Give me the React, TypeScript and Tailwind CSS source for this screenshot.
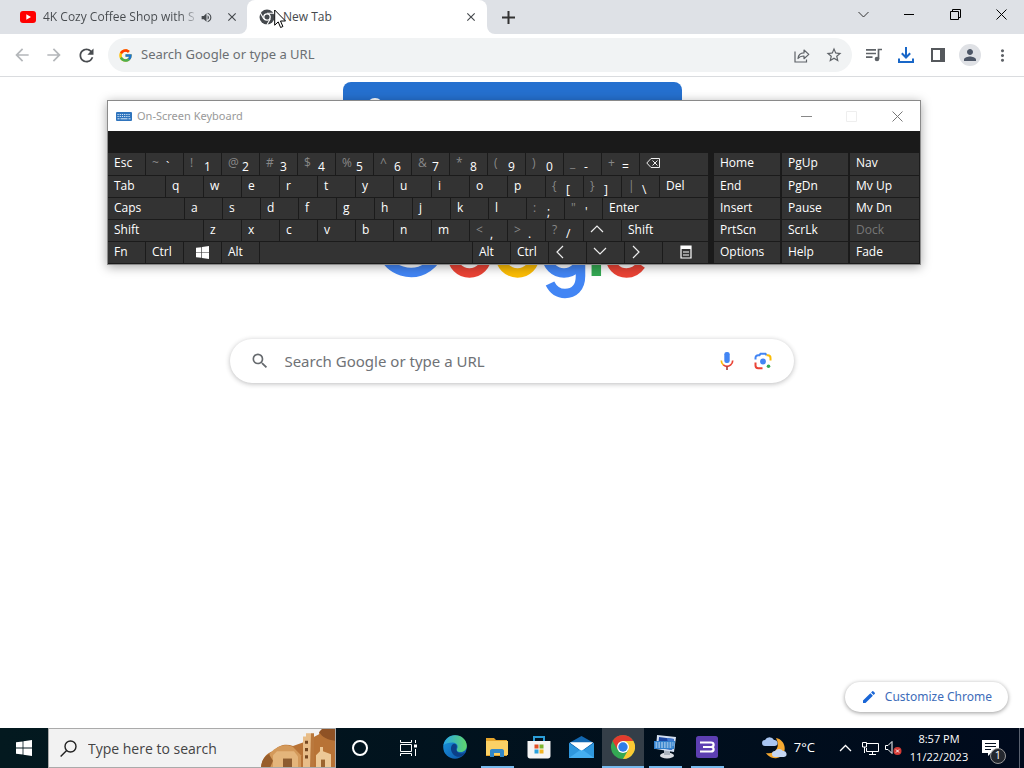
import { ReactNode } from 'react'
import { clsx } from 'clsx'
import { FcGoogle } from 'react-icons/fc'
import {
  MdArrowBack,
  MdArrowForward,
  MdClose,
  MdEdit,
  MdMoreVert,
  MdOutlineStarBorder,
  MdPerson,
  MdRefresh,
  MdSearch,
  MdVolumeUp,
} from 'react-icons/md'

interface KeyDef {
  label?: string
  shift?: string
  icon?: ReactNode
  name?: string
  size?: number
  dim?: boolean
  center?: boolean
}

const chars = (s: string): KeyDef[] => s.split('').map((c) => ({ label: c }))
const pair = (shift: string, label: string): KeyDef => ({ shift, label })

const Chevron = ({ d }: { d: string }) => (
  <svg width="14" height="14" viewBox="0 0 14 14" fill="none" stroke="#eee" strokeWidth="1.2">
    <path d={d} />
  </svg>
)

const WindowsLogo = ({ size }: { size: number }) => (
  <svg width={size} height={size} viewBox="0 0 16 16" fill="#fff">
    <path d="M0 2.3 6.6 1.4v6.2H0zM7.4 1.3 16 0v7.6H7.4zM0 8.4h6.6v6.2L0 13.7zM7.4 8.4H16V16l-8.6-1.3z" />
  </svg>
)

const backspaceIcon = (
  <svg width="14" height="12" viewBox="0 0 14 12" fill="none" stroke="#eee" strokeWidth="1">
    <path d="M5 1.5h8.5v9H5L.8 6zM6.5 3.5l5 5M11.5 3.5l-5 5" />
  </svg>
)

const menuIcon = (
  <svg width="12" height="14" viewBox="0 0 12 14" fill="none" stroke="#fff" strokeWidth="1.2">
    <path d="M1 1h10v12H1zM1 3.5h10M3 7h6M3 10h6" />
    <path d="M1 2h10" strokeWidth="2" />
  </svg>
)

const rows: KeyDef[][] = [
  [
    { label: 'Esc' },
    pair('~', '`'),
    pair('!', '1'),
    pair('@', '2'),
    pair('#', '3'),
    pair('$', '4'),
    pair('%', '5'),
    pair('^', '6'),
    pair('&', '7'),
    pair('*', '8'),
    pair('(', '9'),
    pair(')', '0'),
    pair('_', '-'),
    pair('+', '='),
    { icon: backspaceIcon, name: 'Backspace', size: 69 },
  ],
  [
    { label: 'Tab', size: 58 },
    ...chars('qwertyuiop'),
    pair('{', '['),
    pair('}', ']'),
    pair('|', '\\'),
    { label: 'Del', size: 49 },
  ],
  [
    { label: 'Caps', size: 77 },
    ...chars('asdfghjkl'),
    pair(':', ';'),
    pair('"', "'"),
    { label: 'Enter', size: 106 },
  ],
  [
    { label: 'Shift', size: 96 },
    ...chars('zxcvbnm'),
    pair('<', ','),
    pair('>', '.'),
    pair('?', '/'),
    { icon: <Chevron d="M1 9l6-6 6 6" />, name: 'Up' },
    { label: 'Shift', size: 87 },
  ],
  [
    { label: 'Fn' },
    { label: 'Ctrl' },
    { icon: <WindowsLogo size={13} />, name: 'Windows', center: true },
    { label: 'Alt' },
    { name: 'Space', size: 213 },
    { label: 'Alt' },
    { label: 'Ctrl' },
    { icon: <Chevron d="M8 1L2 7l6 6" />, name: 'Left' },
    { icon: <Chevron d="M1 3l6 6 6-6" />, name: 'Down' },
    { icon: <Chevron d="M2 1l6 6-6 6" />, name: 'Right' },
    { icon: menuIcon, name: 'Menu', size: 46, center: true },
  ],
]

const navColumns = [
  ['Home', 'End', 'Insert', 'PrtScn', 'Options'],
  ['PgUp', 'PgDn', 'Pause', 'ScrLk', 'Help'],
  ['Nav', 'Mv Up', 'Mv Dn', 'Dock', 'Fade'],
]

function Key({ def }: { def: KeyDef }) {
  const { label, shift, icon, name, size = 38, dim, center } = def
  return (
    <button
      aria-label={name}
      style={{ flex: `${size} 1 ${size}px` }}
      className={clsx(
        'flex min-w-0 items-start overflow-hidden border-r border-b border-[#1b1b1b] bg-[#333] text-left leading-5',
        dim ? 'text-[#777]' : 'text-white',
        center ? 'justify-center' : 'pl-1.5'
      )}
    >
      {shift ? (
        <>
          <span className="w-3.5 shrink-0 text-[#888]">{shift}</span>
          <span className="pt-1">{label}</span>
        </>
      ) : icon ? (
        <span className="flex h-5 items-center">{icon}</span>
      ) : (
        label
      )}
    </button>
  )
}

function OnScreenKeyboard() {
  return (
    <section
      aria-label="On-Screen Keyboard"
      className="absolute top-[100px] left-[107px] flex w-[814px] flex-col border border-[#8a8a8a] bg-[#1a1a1a] text-[12px] shadow-[0_2px_10px_rgba(0,0,0,0.35)]"
    >
      <header className="flex h-[30px] items-center bg-white pl-2 text-[#999]">
        <svg width="16" height="9" viewBox="0 0 16 9">
          <rect width="16" height="9" rx="1" fill="#2f74bd" />
          <path d="M1.5 2.5h13M1.5 4.5h13" stroke="#d7e8f8" strokeDasharray="1.2 1" />
          <path d="M1.5 6.8h2M4.5 6.8h7M12.5 6.8h2" stroke="#d7e8f8" />
        </svg>
        <h2 className="ml-[5px] grow font-['Noto_Sans',sans-serif] text-[11px]">On-Screen Keyboard</h2>
        <button aria-label="Minimize keyboard" className="flex w-[45px] justify-center">
          <svg width="11" height="11" viewBox="0 0 11 11" stroke="#888">
            <path d="M0 5.5h11" />
          </svg>
        </button>
        <button aria-label="Maximize keyboard" className="flex w-[45px] justify-center" disabled>
          <svg width="11" height="11" viewBox="0 0 11 11" fill="none" stroke="#eee">
            <path d="M.5.5h10v10H.5z" />
          </svg>
        </button>
        <button aria-label="Close keyboard" className="flex w-[46px] justify-center">
          <svg width="11" height="11" viewBox="0 0 11 11" stroke="#777">
            <path d="M.5.5l10 10M10.5.5l-10 10" />
          </svg>
        </button>
      </header>
      <div className="flex pt-[22px]">
        <div className="mr-[5px] flex grow flex-col">
          {rows.map((row, i) => (
            <div key={i} className={clsx('flex', i === 0 ? 'h-[23px]' : 'h-[22px]')}>
              {row.map((def, j) => (
                <Key key={j} def={def} />
              ))}
            </div>
          ))}
        </div>
        <div className="flex w-[206px] gap-px">
          {navColumns.map((col, i) => (
            <div key={i} className={clsx('flex flex-col', i === 2 ? 'w-[70px]' : 'flex-1')}>
              {col.map((label, j) => (
                <div key={label} className={clsx('flex', j === 0 ? 'h-[23px]' : 'h-[22px]')}>
                  <Key def={{ label, dim: label === 'Dock' }} />
                </div>
              ))}
            </div>
          ))}
        </div>
      </div>
    </section>
  )
}

function TabStrip() {
  return (
    <header className="flex h-[34px] bg-white text-[12px] text-[#45494d]">
      <div className="flex w-[247px] items-center rounded-br-lg bg-[#dee1e6] pr-2 pl-5">
        <svg width="16" height="12" viewBox="0 0 16 12" className="shrink-0">
          <rect width="16" height="12" rx="3" fill="#f00" />
          <path d="M6.3 3.3v5.4L11 6z" fill="#fff" />
        </svg>
        <span className="ml-[7px] shrink-0 bg-gradient-to-r from-[#45494d] from-90% to-[#b8bbc0] bg-clip-text whitespace-nowrap text-transparent">
          4K Cozy Coffee Shop with S
        </span>
        <button aria-label="Mute tab" className="ml-auto">
          <MdVolumeUp size={13} />
        </button>
        <button aria-label="Close tab" className="ml-3">
          <MdClose size={14} />
        </button>
      </div>
      <div className="w-60 bg-[linear-gradient(#dee1e6_50%,#fff_50%)]">
        <div className="flex h-full items-center rounded-t-lg bg-white pr-[9px] pl-3">
          <svg width="16" height="16" viewBox="0 0 16 16">
            <circle cx="8" cy="8" r="7.5" fill="#45494d" />
            <circle cx="8" cy="8" r="3.2" fill="#45494d" stroke="#fff" strokeWidth="1.3" />
            <path d="M8 4.2h7M4.8 10 1.4 4M11.2 10l-3.4 6" stroke="#fff" strokeWidth="1.1" />
          </svg>
          <span className="ml-2 grow">New Tab</span>
          <button aria-label="Close tab">
            <MdClose size={14} />
          </button>
        </div>
      </div>
      <div className="flex grow items-center rounded-bl-lg bg-[#dee1e6] text-[#222]">
        <button aria-label="New tab" className="ml-[15px]">
          <svg width="13" height="13" viewBox="0 0 13 13" stroke="#333" strokeWidth="2">
            <path d="M6.5 0v13M0 6.5h13" />
          </svg>
        </button>
        <div className="mb-1.5 ml-auto flex">
          <button aria-label="Search tabs" className="flex w-[46px] justify-center">
            <svg width="11" height="11" viewBox="0 0 11 11" fill="none" stroke="#333">
              <path d="M.5 3l5 5 5-5" />
            </svg>
          </button>
          <button aria-label="Minimize" className="flex w-[46px] justify-center">
            <svg width="10" height="11" viewBox="0 0 10 11" stroke="#000">
              <path d="M0 5.5h10" />
            </svg>
          </button>
          <button aria-label="Restore" className="flex w-[46px] justify-center">
            <svg width="11" height="11" viewBox="0 0 11 11" fill="none" stroke="#000">
              <path d="M.5 2.5h8v8h-8zM2.5 2.5v-2h8v8h-2" />
            </svg>
          </button>
          <button aria-label="Close" className="flex w-[46px] justify-center">
            <svg width="11" height="11" viewBox="0 0 11 11" stroke="#000">
              <path d="M.5.5l10 10M10.5.5l-10 10" />
            </svg>
          </button>
        </div>
      </div>
    </header>
  )
}

function ToolButton({ label, children }: { label: string; children: ReactNode }) {
  return (
    <button aria-label={label} className="flex h-8 w-8 shrink-0 items-center justify-center">
      {children}
    </button>
  )
}

function Toolbar() {
  return (
    <div className="flex h-[43px] items-center border-b border-[#dadcdf] bg-white px-1.5 text-[#5f6368]">
      <div className="flex text-[#b4b7ba]">
        <ToolButton label="Back">
          <MdArrowBack size={20} />
        </ToolButton>
        <ToolButton label="Forward">
          <MdArrowForward size={20} />
        </ToolButton>
      </div>
      <ToolButton label="Reload">
        <MdRefresh size={21} color="#494c50" />
      </ToolButton>
      <div className="mx-1.5 flex h-[34px] grow items-center rounded-full bg-[#f1f3f4] pr-0.5 pl-2.5">
        <FcGoogle size={15} />
        <input
          aria-label="Address bar"
          placeholder="Search Google or type a URL"
          className="ml-2 min-w-0 grow bg-transparent font-['Noto_Sans',sans-serif] text-[13px] outline-none placeholder:text-[#6b6f73]"
        />
        <ToolButton label="Share">
          <svg width="16" height="15" viewBox="0 0 16 15" fill="none" stroke="#5f6368" strokeWidth="1.2">
            <path d="M1 3.5V14h11.5v-2.5" />
            <path d="M4 10.5c.3-3.5 2.5-5.5 6-5.6V2l4.8 4.4-4.8 4.3V8c-2.8 0-4.6.7-6 2.5z" strokeLinejoin="round" />
          </svg>
        </ToolButton>
        <ToolButton label="Bookmark this tab">
          <MdOutlineStarBorder size={18} />
        </ToolButton>
      </div>
      <ToolButton label="Media controls">
        <svg width="16" height="14" viewBox="0 0 16 14" fill="none" stroke="#5f6368" strokeWidth="1.7">
          <path d="M0 1.8h10M0 5.5h10M0 9.2h6.5M12.5 11V1.5H16" />
          <circle cx="11" cy="11" r="2.3" fill="#5f6368" stroke="none" />
        </svg>
      </ToolButton>
      <ToolButton label="Downloads">
        <svg width="16" height="17" viewBox="0 0 16 17" fill="none" stroke="#1967c8" strokeWidth="2">
          <path d="M8 0v10M3.8 6.3 8 10.5l4.2-4.2M1 11.5V15h14v-3.5" />
        </svg>
      </ToolButton>
      <ToolButton label="Side panel">
        <svg width="14" height="14" viewBox="0 0 14 14">
          <path d="M1 1h12v12H1z" fill="none" stroke="#55585c" strokeWidth="2" />
          <path d="M9 0h5v14H9z" fill="#55585c" />
        </svg>
      </ToolButton>
      <ToolButton label="Profile">
        <span className="flex h-[22px] w-[22px] items-center justify-center rounded-full bg-[#dfe1e5] text-[#4d5666]">
          <MdPerson size={18} />
        </span>
      </ToolButton>
      <ToolButton label="Menu">
        <MdMoreVert size={19} />
      </ToolButton>
    </div>
  )
}

const GoogleLogo = () => (
  <svg width="272" height="92" viewBox="0 0 272 92" fill="none" strokeWidth="9.5" className="mx-auto mt-[46px]">
    <path d="M57 15A29.7 29.7 0 1 0 64.5 36H36" stroke="#4285f4" />
    <circle cx="93.5" cy="47.5" r="17.4" stroke="#ea4335" />
    <circle cx="141.5" cy="47.5" r="17.4" stroke="#fbbc05" />
    <circle cx="188" cy="47.500" r="17.400" stroke="#4285f4" />
    <path d="M204.500 26v42c0 12-7 17.500-15.500 17.500-7 0-12-4-15-10" stroke="#4285f4" />
    <path d="M220.300 3v65" stroke="#34a853" />
    <path d="M234 52l31-13c-3-7-9-9.500-15-9-9 .7-16 8-16 17.500 0 10 7 17.500 16.500 17.500 6.500 0 11-3 14.500-8" stroke="#ea4335" />
  </svg>
)

function NewTabPage() {
  return (
    <main className="flex grow flex-col bg-white">
      <div className="mx-auto mt-[5px] h-20 w-[339px] rounded-lg bg-[#2570cf] pt-4 pl-6">
        <div className="h-4 w-4 rounded-full bg-white" />
      </div>
      <GoogleLogo />
      <form role="search" className="mx-auto mt-[39px] flex h-11 w-[55%] items-center rounded-full bg-white pr-[22px] pl-5 shadow-[0_1px_5px_rgba(32,33,36,0.3)]">
        <MdSearch size={20} color="#666a6e" className="shrink-0" />
        <input
          aria-label="Search"
          placeholder="Search Google or type a URL"
          className="ml-3.5 min-w-0 grow bg-transparent font-['Noto_Sans',sans-serif] text-[15px] outline-none placeholder:text-[#6f7276]"
        />
        <button type="button" aria-label="Search by voice">
          <svg width="14" height="20" viewBox="0 0 14 20" fill="none" strokeWidth="1.7">
            <rect x="4.3" y="1" width="5.4" height="11" rx="2.3" fill="#4285f4" />
            <path d="M1.3 9.5c0 2 .8 3.5 2.2 4.500" stroke="#fbbc05" />
            <path d="M3.3 13.900c2.200 1.600 5.300 1.600 7.400 0 1.300-1 2-2.500 2-4.400" stroke="#ea4335" />
            <path d="M7 15v4" stroke="#b2473c" />
          </svg>
        </button>
        <button type="button" aria-label="Search by image" className="ml-5">
          <svg width="18" height="18" viewBox="0 0 18 18" fill="none" strokeWidth="2">
            <path d="M1.500 7.500V6c0-1.700 1-2.700 2.700-2.700h1.300l1-1.500h5l1 1.500" stroke="#4285f4" />
            <path d="M12.500 3.300h1.300c1.700 0 2.700 1 2.700 2.700v2.500" stroke="#fbbc05" />
            <path d="M1.500 10.500v3c0 1.700 1 2.700 2.700 2.700H8.500" stroke="#ea4335" />
            <circle cx="9" cy="9.500" r="2.900" fill="#4285f4" />
            <circle cx="14.500" cy="14.300" r="1.800" fill="#34a853" />
          </svg>
        </button>
      </form>
      <button className="mt-auto mr-4 mb-4 flex h-[30px] items-center self-end rounded-full bg-white px-4 font-['Noto_Sans',sans-serif] text-[12px] text-[#3d6cb9] shadow-[0_1px_4px_rgba(0,0,0,0.4)]">
        <MdEdit size={16} color="#1a66d6" />
        <span className="ml-2">Customize Chrome</span>
      </button>
    </main>
  )
}

const Castle = () => (
  <svg width="74" height="40" viewBox="0 0 74 38" preserveAspectRatio="none" className="shrink-0">
    <path d="M0 38c1-9 5-14 12-16 7-7 14-7 20-5l12-4L58 6c0-3 3-5 5-6h11v38z" fill="#b87336" />
    <path d="M58 4c4 5 8 7 16 8V0H62z" fill="#8f5225" />
    <path d="M9 24c8-8 17-9 23-6l8 8v12H6z" fill="#d3995a" />
    <path d="M16 22h17l4 5v11H12V26z" fill="#e4b57b" />
    <path d="M22 38v-9h9v9z" fill="#8d5c30" />
    <path d="M42 8h3V5h5v3h3v30H42z" fill="#e8bd88" />
    <path d="M50 5h3v33h-4z" fill="#b9783d" />
    <path d="M44 12h3v3h-3zM44 19h3v3h-3zM44 26h3v3h-3z" fill="#754720" />
    <path d="M55 26l4-4v-4h3v4l8 3v13H55z" fill="#edc997" />
    <path d="M60 38v-8h4v8z" fill="#9c642f" />
    <path d="M0 38c0-6 3-11 8-13l4 6-3 7z" fill="#985e2b" />
  </svg>
)

const EdgeIcon = () => (
  <svg width="24" height="24" viewBox="0 0 24 24">
    <defs>
      <linearGradient id="edgeTop" x1="0" x2="1">
        <stop offset="0" stopColor="#29a7e8" />
        <stop offset="1" stopColor="#60d66b" />
      </linearGradient>
      <linearGradient id="edgeBody" x1="0" y1="0" x2="1" y2="1">
        <stop offset="0" stopColor="#1a9be0" />
        <stop offset="1" stopColor="#0c4fa6" />
      </linearGradient>
    </defs>
    <circle cx="12" cy="12" r="11.8" fill="url(#edgeBody)" />
    <path d="M.5 10C2 4 6.5.2 12 .2c7 0 11.800 5 11.800 10.500 0 4-3 6.300-6.500 6.300-3 0-4.500-1.400-3.300-3 1.600-2.400.2-6.400-4.300-6.400C5.500 7.600 2.200 8.500.5 10z" fill="url(#edgeTop)" />
    <path d="M9.500 9.500c-3 3-1.500 10 4 12 3.500.8 7-.5 9-4-4 2.300-8.500.5-9-2.500-.2-2 .5-2.500.3-4-.5-2-2.800-2.800-4.300-1.500z" fill="#0b3f88" />
  </svg>
)

const ExplorerIcon = () => (
  <svg width="22" height="20" viewBox="0 0 22 20">
    <path d="M0 1h8l2 2h11v16H0z" fill="#e5a52c" />
    <path d="M0 4h22v14H0z" fill="#fbd165" />
    <path d="M4 20v-6c0-1 .5-2 2-2h10c1.500 0 2 1 2 2v6h-4v-4H8v4z" fill="#3288c8" />
  </svg>
)

const StoreIcon = () => (
  <svg width="24" height="24" viewBox="0 0 24 24">
    <path d="M7 6V2h10v4" fill="none" stroke="#2b9ed8" strokeWidth="2" />
    <path d="M.5 6h23v15c0 1.500-1 2.500-2.500 2.500H3C1.500 23.500.5 22.500.5 21z" fill="#f5f5f5" />
    <path d="M7.500 9.500h4v4h-4z" fill="#e25126" />
    <path d="M12.500 9.500h4v4h-4z" fill="#7cb42c" />
    <path d="M7.500 14.500h4v4h-4z" fill="#2aa2de" />
    <path d="M12.500 14.500h4v4h-4z" fill="#f2b524" />
  </svg>
)

const MailIcon = () => (
  <svg width="25" height="22" viewBox="0 0 25 22">
    <path d="M0 7 12.500 0 25 7v15H0z" fill="#1267b0" />
    <path d="M1 6.500h23L12.500 15z" fill="#fff" />
    <path d="M0 7l12.500 8.500L25 7v15H0z" fill="#2f97dd" />
    <path d="M0 22l12.500-9L25 22z" fill="#45aef0" />
    <path d="M1 6.500h23L12.500 14.500z" fill="#fff" />
  </svg>
)

const ChromeIcon = () => (
  <svg width="24" height="24" viewBox="0 0 24 24">
    <circle cx="12" cy="12" r="12" fill="#34a853" />
    <path d="M12 0a12 12 0 0 1 10.400 6H12L6.800 15 1.600 6A12 12 0 0 1 12 0z" fill="#e33b2e" />
    <path d="M22.400 6A12 12 0 0 1 12 24l5.200-9L12 6z" fill="#fcc934" />
    <circle cx="12" cy="12" r="6" fill="#fff" />
    <circle cx="12" cy="12" r="4.700" fill="#2f7de8" />
  </svg>
)

const OskIcon = () => (
  <svg width="24" height="24" viewBox="0 0 24 24">
    <ellipse cx="14" cy="20.500" rx="7" ry="3" fill="#d9dde3" />
    <path d="M11 14h6v6h-6z" fill="#aab3be" />
    <path d="M4 0l19 2-2 15L3 14z" fill="#d3e0f2" />
    <path d="M6 2l15 2-2 11-14-2z" fill="#1b46a3" />
    <path d="M14 3l7 1-2 11-3-.5z" fill="#3f78d0" />
    <path d="M1 6h21l-1 8H1z" fill="#2f7fcc" />
    <path d="M2.500 8h18M2.500 10h18M2.500 12h17" stroke="#e3effa" strokeDasharray="1.800 1" />
  </svg>
)

const PurpleIcon = () => (
  <svg width="22" height="22" viewBox="0 0 22 22">
    <rect width="22" height="22" rx="2.500" fill="#5d3fb2" />
    <path d="M4 6.500h11c3.500 0 3.500 4.500 0 4.500H7M15 11c3.500 0 3.500 4.500 0 4.500H4" fill="none" stroke="#fff" strokeWidth="2.200" />
  </svg>
)

const apps = [
  { name: 'Microsoft Edge', icon: <EdgeIcon /> },
  { name: 'File Explorer', icon: <ExplorerIcon />, running: true },
  { name: 'Microsoft Store', icon: <StoreIcon /> },
  { name: 'Mail', icon: <MailIcon /> },
  { name: 'Google Chrome', icon: <ChromeIcon />, running: true, active: true },
  { name: 'Keyboard', icon: <OskIcon />, running: true },
  { name: 'Browser', icon: <PurpleIcon />, running: true },
]

function Taskbar() {
  return (
    <footer className="flex h-10 bg-gradient-to-r from-[#03191f] to-[#000a1c] text-white">
      <button aria-label="Start" className="flex w-12 items-center justify-center">
        <WindowsLogo size={16} />
      </button>
      <label className="flex w-72 items-center overflow-hidden border border-[#aaa] bg-[#f2f2f2] pl-[11px] text-[#333]">
        <svg width="17" height="17" viewBox="0 0 17 17" fill="none" stroke="#222" strokeWidth="1.4" className="shrink-0">
          <circle cx="10.5" cy="6.5" r="5.5" />
          <path d="M6.6 10.4.6 16.4" />
        </svg>
        <input
          aria-label="Search Windows"
          placeholder="Type here to search"
          className="ml-[11px] min-w-0 grow bg-transparent text-[14px] outline-none placeholder:text-[#444]"
        />
        <Castle />
      </label>
      <button aria-label="Cortana" className="flex w-12 items-center justify-center">
        <svg width="16" height="16" viewBox="0 0 16 16" fill="none" stroke="#fff" strokeWidth="2">
          <circle cx="8" cy="8" r="7" />
        </svg>
      </button>
      <button aria-label="Task view" className="flex w-12 items-center justify-center">
        <svg width="17" height="16" viewBox="0 0 17 16" fill="none" stroke="#fff">
          <path d="M.5 4.500h11v7H.5zM.5 0v2.500h11V0M.5 16v-2.500h11V16M15.500 0v3M15.500 9v7" />
          <path d="M14 4.500h3v3h-3z" fill="#fff" stroke="none" />
        </svg>
      </button>
      <div className="ml-0.5 flex">
        {apps.map((app) => (
          <button
            key={app.name}
            aria-label={app.name}
            className={clsx('flex w-[42px] flex-col items-center', app.active && 'bg-[#343e48]')}
          >
            <span className="flex grow items-center">{app.icon}</span>
            <span className={clsx('h-0.5', app.active ? 'w-full' : 'w-[33px]', app.running && 'bg-[#76b9ed]')} />
          </button>
        ))}
      </div>
      <div className="ml-auto flex items-center">
        <button className="flex items-center text-[13px]">
          <svg width="26" height="24" viewBox="0 0 26 24">
            <path d="M14 2c11 2 12 18 1 20-5 1-9-2-11-5 9 2 15-6 10-15z" fill="#f6a931" />
            <path d="M3 10a3 3 0 0 1 0-6 5 5 0 0 1 9 0 3 3 0 0 1 1 6z" fill="#a9c6f2" />
            <path d="M13 21a3 3 0 0 1 0-6 5 5 0 0 1 8 0 3 3 0 0 1 1 6z" fill="#c6d7f3" />
          </svg>
          <span className="ml-1.5">7°C</span>
        </button>
        <button aria-label="Show hidden icons" className="ml-6">
          <svg width="13" height="12" viewBox="0 0 13 12" fill="none" stroke="#fff" strokeWidth="1.300">
            <path d="M1 9l5.500-5.500L12 9" />
          </svg>
        </button>
        <button aria-label="Network" className="ml-2.5">
          <svg width="17" height="15" viewBox="0 0 17 15" fill="none" stroke="#fff">
            <path d="M5 2.500h11.500v8H4.500V7M10.500 10.500v3M7 13.500h7M.5 1.500h4V6h-4zM2.500 6v6" />
          </svg>
        </button>
        <button aria-label="Volume muted" className="ml-1.5">
          <svg width="17" height="16" viewBox="0 0 17 16" fill="none" stroke="#fff">
            <path d="M.5 5.500H3l4-4v12l-4-4H.5z" />
            <circle cx="12.500" cy="11" r="4" fill="#d53a34" stroke="none" />
            <path d="M11 9.500l3 3M14 9.500l-3 3" />
          </svg>
        </button>
        <button className="ml-1.5 w-[62px] text-center text-[11px] leading-[18px]">
          <div>8:57 PM</div>
          <div>11/22/2023</div>
        </button>
        <button aria-label="1 notification" className="relative ml-3">
          <svg width="17" height="17" viewBox="0 0 17 17">
            <path d="M0 0h17v13H9l-3 3v-3H0z" fill="#fff" />
            <path d="M3 3.500h11M3 6.500h11M3 9.500h6" stroke="#04101f" />
          </svg>
          <span className="absolute top-2 left-2 flex h-4 w-4 items-center justify-center rounded-full border border-[#999] bg-[#24282f] text-[11px]">
            1
          </span>
        </button>
        <button aria-label="Show desktop" className="ml-5 h-10 w-[5px] border-l border-[#5a6270]" />
      </div>
    </footer>
  )
}

export default function App() {
  return (
    <div className="relative flex min-h-screen flex-col overflow-hidden font-['Open_Sans','Noto_Sans',sans-serif]">
      <TabStrip />
      <Toolbar />
      <NewTabPage />
      <Taskbar />
      <OnScreenKeyboard />
      <svg width="13" height="20" viewBox="0 0 13 20" className="pointer-events-none absolute top-[9px] left-[274px]">
        <path d="M.7 1v15.200l3.500-3.300 2.400 5.600 2.300-1-2.400-5.500h5z" fill="#fff" stroke="#000" />
      </svg>
    </div>
  )
}
